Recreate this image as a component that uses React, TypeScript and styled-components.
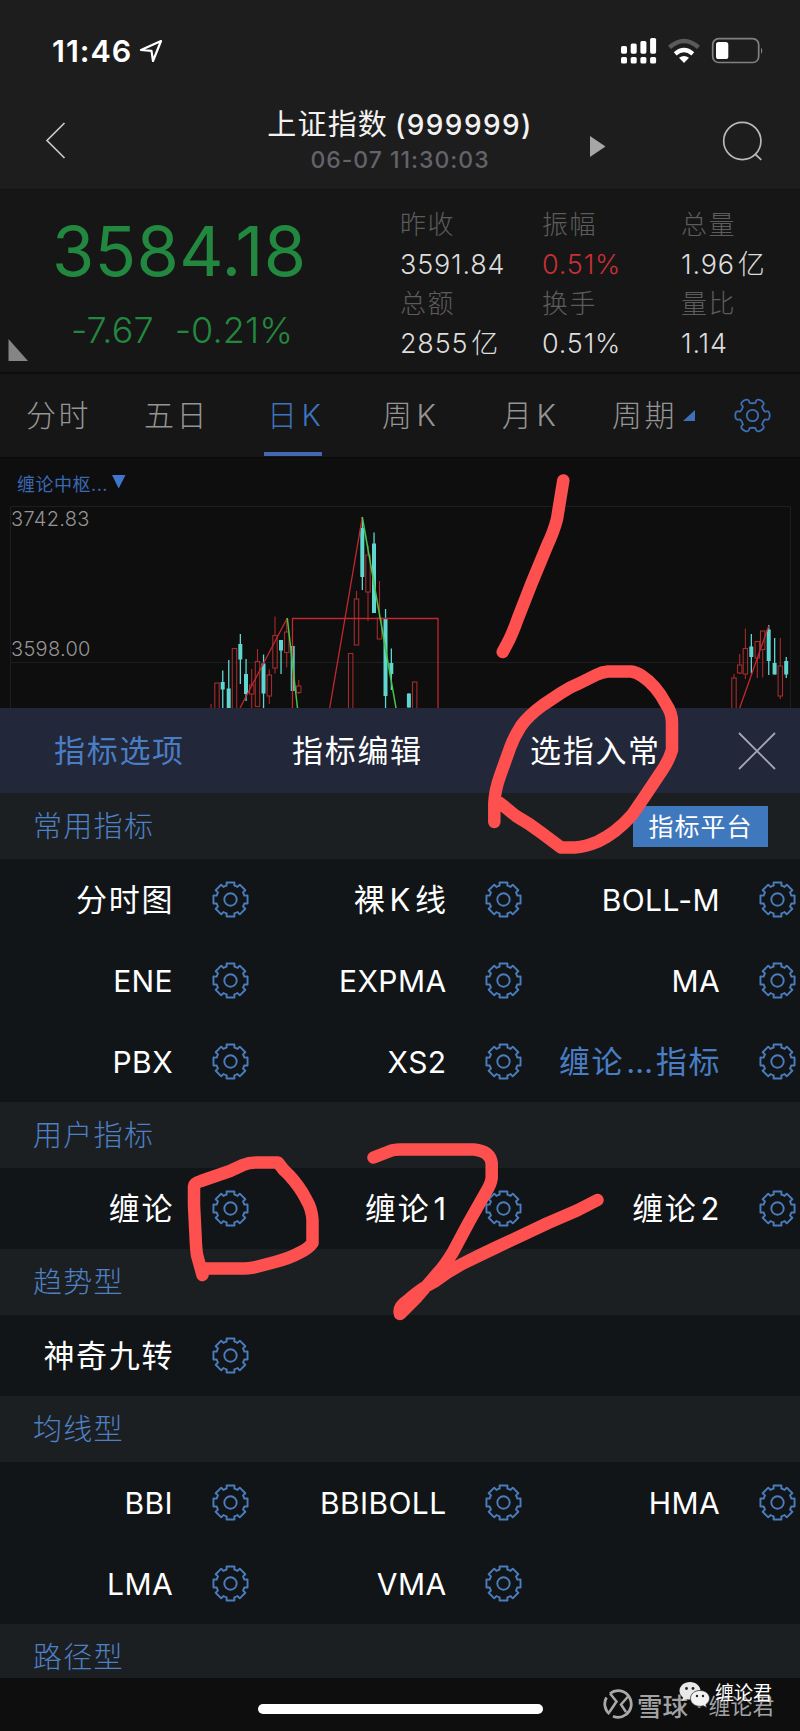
import React from "react";
import styled, { createGlobalStyle } from "styled-components";

const GlobalStyle = createGlobalStyle`
  * { box-sizing: border-box; }
  body {
    margin: 0;
    background: #0e0e0e;
    font-family: Inter, "Noto Sans CJK SC", sans-serif;
    -webkit-font-smoothing: antialiased;
  }
`;

const Screen = styled.main`
  position: relative;
  width: 800px;
  height: 1731px;
  overflow: hidden;
  display: flex;
  flex-direction: column;
  background: #0e0e0e;
  white-space: nowrap;
`;

const Header = styled.header`
  height: 190px;
  flex: none;
  background: #1d1d1d;
  border-bottom: 1px solid #121212;
`;

const StatusBar = styled.div`
  display: flex;
  align-items: center;
  justify-content: space-between;
  height: 102px;
  padding: 0 36px 0 52px;
`;

const Clock = styled.div`
  display: flex;
  align-items: center;
  gap: 7px;
  padding-bottom: 1px;
  color: #fff;
  font-size: 30.5px;
  font-weight: 600;
  letter-spacing: 1px;
`;

const NavBar = styled.div`
  display: grid;
  grid-template-columns: 210px 380px 1fr;
  height: 87px;
`;

const NavCell = styled.div<{ $pad?: number }>`
  display: flex;
  align-items: flex-start;
  padding: 18px 0 0 ${(p) => p.$pad ?? 0}px;
`;

const TitleBlock = styled.div`
  display: flex;
  flex-direction: column;
  align-items: center;
`;

const Title = styled.h1`
  display: flex;
  gap: 7px;
  margin: 4px 0 0;
  height: 38px;
  line-height: 38px;
  font-size: 29px;
  font-weight: 400;
  letter-spacing: 1.2px;
  color: #f2f2f2;
`;

const Code = styled.span`
  font-size: 28px;
  font-weight: 500;
  letter-spacing: 1.4px;
`;

const Stamp = styled.div`
  height: 30px;
  line-height: 32px;
  font-size: 23px;
  font-weight: 500;
  letter-spacing: 1px;
  color: #63636a;
`;

const Quote = styled.section`
  display: flex;
  flex: none;
  height: 184px;
  background: #161616;
  border-bottom: 2px solid #0d0d0d;
`;

const PriceBlock = styled.div`
  position: relative;
  width: 400px;
  padding: 20px 0 0 52px;
  color: #23883f;
`;

const Price = styled.div`
  height: 84px;
  line-height: 84px;
  font-size: 68.5px;
  font-weight: 400;
  letter-spacing: 0.3px;
`;

const Change = styled.div`
  display: flex;
  gap: 21px;
  height: 72px;
  padding-left: 19px;
  line-height: 72px;
  font-size: 36px;
  font-weight: 300;
  letter-spacing: 0.1px;
`;

const Corner = styled.svg`
  position: absolute;
  left: 8px;
  bottom: 11px;
`;

const Stats = styled.div`
  display: grid;
  grid-template-columns: 142px 139px 1fr;
  grid-auto-rows: 79px;
  flex: 1;
  padding-top: 15px;
`;

const StatLabel = styled.div`
  height: 40px;
  line-height: 40px;
  font-size: 26px;
  font-weight: 300;
  letter-spacing: 1.5px;
  color: #5c5c5c;
`;

const StatValue = styled.div<{ $up?: boolean }>`
  height: 39px;
  line-height: 39px;
  font-size: 27px;
  font-weight: 300;
  letter-spacing: 0.8px;
  color: ${(p) => (p.$up ? "#c92f35" : "#dcdcdc")};
  span { margin-left: 3px; }
`;

const Tabs = styled.nav`
  display: flex;
  flex: none;
  height: 84px;
  padding: 1px 0 0 26px;
  background: #161616;
  border-bottom: 1px solid #0a0a0a;
`;

const Tab = styled.div<{ $active?: boolean; $w: number }>`
  position: relative;
  display: flex;
  align-items: center;
  width: ${(p) => p.$w}px;
  height: 81px;
  font-size: 30px;
  font-weight: 300;
  color: ${(p) => (p.$active ? "#3d74bf" : "#959595")};
  &::after {
    content: "";
    display: ${(p) => (p.$active ? "block" : "none")};
    position: absolute;
    left: -3px;
    bottom: 0;
    width: 58px;
    height: 4px;
    background: #4468b0;
  }
`;

const TabLabel = styled.div`
  padding-bottom: 1px;
  line-height: 44px;
  letter-spacing: 2.4px;
  span { margin-left: 2px; }
`;

const ChartPane = styled.section`
  position: relative;
  flex: none;
  height: 250px;
  background: #0e0e0e;
`;

const ChartSvg = styled.svg`
  display: block;
`;

const Legend = styled.div`
  position: absolute;
  left: 17px;
  top: 11px;
  display: flex;
  align-items: center;
  gap: 4px;
  height: 28px;
  font-size: 18px;
  font-weight: 400;
  letter-spacing: 0.5px;
  color: #3b68b4;
`;

const AxisLabel = styled.div<{ $top: number }>`
  position: absolute;
  left: 11px;
  top: ${(p) => p.$top}px;
  line-height: 24px;
  font-size: 20px;
  font-weight: 300;
  letter-spacing: 0.3px;
  color: #959595;
`;

const Sheet = styled.section`
  flex: none;
  height: 970px;
  overflow: hidden;
  background: #111518;
`;

const SheetHead = styled.div`
  display: flex;
  align-items: center;
  height: 85px;
  padding-left: 54px;
  background: #22273a;
`;

const SheetTab = styled.div<{ $active?: boolean; $w: number }>`
  width: ${(p) => p.$w}px;
  font-size: 31px;
  line-height: 44px;
  letter-spacing: 1.7px;
  color: ${(p) => (p.$active ? "#4a7ec4" : "#fff")};
`;

const SectionHead = styled.div`
  display: flex;
  align-items: center;
  justify-content: space-between;
  height: 66px;
  padding: 0 32px 0 33px;
  background: #1b1f22;
  font-size: 29px;
  font-weight: 300;
  letter-spacing: 1.3px;
  color: #4f80c4;
`;

const SectionTitle = styled.div`
  padding-bottom: 4px;
`;

const Platform = styled.div`
  display: flex;
  align-items: center;
  justify-content: center;
  width: 135px;
  height: 41px;
  padding-bottom: 3px;
  background: #3f78bd;
  color: #fff;
  font-size: 25px;
  font-weight: 400;
  letter-spacing: 1px;
`;

const Grid = styled.div`
  display: grid;
  grid-template-columns: 273.5px 273.5px 253px;
  grid-auto-rows: 81px;
`;

const Cell = styled.div<{ $active?: boolean }>`
  display: grid;
  grid-template-columns: 173px 37px;
  column-gap: 38.5px;
  align-items: center;
  color: ${(p) => (p.$active ? "#4a7ec4" : "#fff")};
`;

const Name = styled.div<{ $cjk: boolean }>`
  text-align: right;
  padding-bottom: ${(p) => (p.$cjk ? 4 : 0)}px;
  font-size: ${(p) => (p.$cjk ? 31 : 30)}px;
  letter-spacing: ${(p) => (p.$cjk ? 1.7 : 0.4)}px;
  margin-right: ${(p) => (p.$cjk ? -1.2 : 0)}px;
`;

const Latin = styled.span<{ $last?: boolean }>`
  margin-left: 3px;
  margin-right: ${(p) => (p.$last ? 0 : 3)}px;
`;

const Dots = styled.span`
  margin: 0 1px 0 2px;
`;

const Footer = styled.footer`
  flex: 1;
  display: flex;
  justify-content: center;
  padding-top: 26px;
`;

const HomeBar = styled.div`
  width: 285px;
  height: 10px;
  border-radius: 5px;
  background: #fff;
`;

const Watermark = styled.div`
  position: absolute;
  left: 602px;
  top: 1685px;
  display: flex;
  align-items: center;
  height: 38px;
  color: #a3a3a3;
  font-size: 25.5px;
  font-weight: 500;
`;

const WatermarkUser = styled.span`
  margin-left: 8px;
  font-size: 22px;
  font-weight: 400;
`;

const Account = styled.div`
  position: absolute;
  left: 679px;
  top: 1680px;
  display: flex;
  gap: 4px;
  color: #fff;
  font-size: 19px;
  line-height: 28px;
`;

const Overlay = styled.svg`
  position: absolute;
  inset: 0;
  pointer-events: none;
`;

/* ---------- icons ---------- */

const polar = (r: number, deg: number) => {
  const a = (deg * Math.PI) / 180;
  return `${(r * Math.cos(a)).toFixed(2)} ${(r * Math.sin(a)).toFixed(2)}`;
};

const cogPath = Array.from({ length: 8 }, (_, i) => {
  const c = i * 45 - 90;
  return `${i ? "L" : "M"}${polar(14.4, c - 15.5)}L${polar(17.5, c - 13)}L${polar(17.5, c + 13)}L${polar(14.4, c + 15.5)}A14.4 14.4 0 0 1 ${polar(14.4, c + 29.5)}`;
}).join("") + "Z";

const Cog = () => (
  <svg width="37" height="37" viewBox="-18.5 -18.5 37 37" fill="none" stroke="#4a7dbd" strokeWidth="1.9" strokeLinejoin="round">
    <path d={cogPath} />
    <circle r="6.2" />
  </svg>
);

const roundCogPath = Array.from({ length: 6 }, (_, i) => {
  const c = i * 60;
  return `${i ? "L" : "M"}${polar(13, c - 17)}Q${polar(17, c - 17)} ${polar(17, c - 8)}Q${polar(17.6, c)} ${polar(17, c + 8)}Q${polar(17, c + 17)} ${polar(13, c + 17)}Q${polar(11.8, c + 30)} ${polar(13, c + 43)}`;
}).join("") + "Z";

const RoundCog = () => (
  <svg width="37" height="37" viewBox="-18.5 -18.5 37 37" fill="none" stroke="#3d6fb5" strokeWidth="1.8" strokeLinejoin="round">
    <path d={roundCogPath} />
    <circle r="5.7" />
  </svg>
);

const StatusIcons = () => (
  <svg width="144" height="28" viewBox="619 37 144 28">
    <g fill="#fff">
      {[46, 43.5, 41, 38].map((top, i) => (
        <g key={top}>
          <rect x={620 + i * 9.7} y={top} width="6" height={53.7 - top} rx="1.6" />
          <rect x={620 + i * 9.7} y="57" width="6" height="6.6" rx="1.6" />
        </g>
      ))}
      <path d="M683 63l-5-5.200q5-3.800 10 0z" />
    </g>
    <path d="M674.200 53.800q8.800-7.600 17.600 0" fill="none" stroke="#fff" strokeWidth="4.300" />
    <path d="M668.500 47.400q14.500-12.800 29 0" fill="none" stroke="#5a5a5a" strokeWidth="4.300" />
    <rect x="711.700" y="38.700" width="46" height="23.800" rx="6" fill="none" stroke="#818181" strokeWidth="1.700" />
    <rect x="715" y="42" width="12.300" height="17" rx="2.600" fill="#fff" />
    <path d="M760 47.500q2.600 3.200 0 6.600z" fill="#818181" />
  </svg>
);

/* ---------- chart ---------- */

// x, high, low, body top, body bottom, direction
type Candle = [number, number, number, number, number, "u" | "d"];

const candles: Candle[] = [
  [211, 704, 710, 709, 715, "u"],
  [217, 683, 712, 683, 712, "u"],
  [222.7, 670.5, 708, 682, 689.5, "d"],
  [228.7, 660, 708, 688.5, 708, "d"],
  [234.5, 648.5, 712, 648.5, 712, "u"],
  [240.3, 634, 684, 644, 659.5, "d"],
  [246, 659, 701, 674, 694, "d"],
  [251.7, 669, 708, 685, 694, "u"],
  [257.5, 649, 707, 661.5, 706.5, "u"],
  [263.5, 654.5, 708, 663.5, 693.5, "d"],
  [269.3, 669.5, 704, 675, 696, "u"],
  [275, 616.5, 673.5, 635.5, 668, "u"],
  [281, 640, 674, 640, 650.5, "d"],
  [286.7, 618, 667.5, 632, 652.5, "u"],
  [292.7, 646, 691, 646, 691, "d"],
  [298.7, 680, 694, 686, 692.5, "u"],
  [350.7, 653.5, 712, 653.5, 712, "u"],
  [356.5, 591, 645, 599, 645, "u"],
  [362.3, 517, 590, 528, 577, "d"],
  [368, 545, 621, 555, 592, "u"],
  [374, 532.5, 613, 543.5, 613, "d"],
  [379.5, 581, 639, 618, 639, "u"],
  [385.5, 609, 708, 618, 696, "d"],
  [391.3, 648.5, 690, 663, 674, "d"],
  [408.9, 693.5, 707.5, 693.5, 707.5, "d"],
  [414.7, 682, 712, 682, 712, "u"],
  [734, 674, 712, 678, 712, "u"],
  [739.7, 654, 674, 665, 673, "u"],
  [745.4, 628.5, 679, 648.5, 674, "u"],
  [751.3, 634, 673.5, 646.5, 657, "d"],
  [757.3, 641.5, 678, 641.5, 658, "u"],
  [762.7, 631, 677.5, 631, 649.5, "u"],
  [768.7, 625, 675, 629.5, 661, "d"],
  [774.6, 638, 674.5, 663, 674.5, "d"],
  [780.3, 638, 699, 666, 696, "u"],
  [786.2, 657, 678, 661, 674.5, "d"],
];

const Chart = () => (
  <ChartSvg width="800" height="250" viewBox="0 458 800 250">
    <g fill="none" stroke="#1d1f1f" strokeWidth="1">
      <path d="M10.500 708V506.500H790.500V708M10 662.500H790" />
    </g>
    {candles.map(([x, high, low, top, bottom, dir]) =>
      dir === "d" ? (
        <g key={x} fill="#5fd6d0">
          <rect x={x - 0.6} y={high} width="1.3" height={low - high} />
          <rect x={x - 2} y={top} width="4" height={bottom - top} />
        </g>
      ) : (
        <g key={x} stroke="#a32b2b" strokeWidth="1.1" fill="none">
          <path d={`M${x} ${high}V${top}M${x} ${bottom}V${low}`} />
          <rect x={x - 2.2} y={top} width="4.4" height={bottom - top} />
        </g>
      )
    )}
    <g fill="none" stroke="#c42730" strokeWidth="1.300">
      <path d="M240 708L287.300 618M329.700 708L362.300 517M739.700 708L768.700 626" />
      <path d="M292.500 708V618.500H438V708" />
    </g>
    <path d="M287.300 618L297.500 708M362.300 517L396 708" fill="none" stroke="#45c646" strokeWidth="1.500" />
  </ChartSvg>
);

/* ---------- indicator lists ---------- */

const sections: { title: string; platform?: boolean; items: string[] }[] = [
  { title: "常用指标", platform: true, items: ["分时图", "裸K线", "BOLL-M", "ENE", "EXPMA", "MA", "PBX", "XS2", "缠论…指标"] },
  { title: "用户指标", items: ["缠论", "缠论1", "缠论2"] },
  { title: "趋势型", items: ["神奇九转"] },
  { title: "均线型", items: ["BBI", "BBIBOLL", "HMA", "LMA", "VMA"] },
  { title: "路径型", items: [] },
];

const hasCjk = (s: string) => /[\u4e00-\u9fff]/.test(s);

const IndicatorName = ({ text }: { text: string }) => {
  if (!hasCjk(text)) return <Name $cjk={false}>{text}</Name>;
  const parts = text.split(/([A-Z0-9]+|…)/).filter(Boolean);
  return (
    <Name $cjk>
      {parts.map((p, i) => {
        if (p === "…") return <Dots key={i}>{p}</Dots>;
        return /[A-Z0-9]/.test(p) ? <Latin key={i} $last={i === parts.length - 1}>{p}</Latin> : p;
      })}
    </Name>
  );
};

const stats: [string, React.ReactNode, boolean?][] = [
  ["昨收", "3591.84"],
  ["振幅", "0.51%", true],
  ["总量", <>1.96<span>亿</span></>],
  ["总额", <>2855<span>亿</span></>],
  ["换手", "0.51%"],
  ["量比", "1.14"],
];

export default function App() {
  return (
    <Screen>
      <GlobalStyle />
      <Header>
        <StatusBar>
          <Clock>
            11:46
            <svg width="24" height="24" viewBox="0 0 24 24" fill="none" stroke="#fff" strokeWidth="2.200" strokeLinejoin="round">
              <path d="M22 2L2 11l10.500.900L14 22z" />
            </svg>
          </Clock>
          <StatusIcons />
        </StatusBar>
        <NavBar>
          <NavCell $pad={45}>
            <svg width="22" height="40" viewBox="0 0 22 40" fill="none" stroke="#c8c8c8" strokeWidth="1.700">
              <path d="M19.500 3L2 20.500L19.500 38" />
            </svg>
          </NavCell>
          <TitleBlock>
            <Title>上证指数<Code>(999999)</Code></Title>
            <Stamp>06-07 11:30:03</Stamp>
          </TitleBlock>
          <NavCell>
            <svg width="172" height="45" viewBox="590 120 172 45" overflow="visible">
              <path d="M590 136v21l15.500-10.500z" fill="#a6a6a6" />
              <g fill="none" stroke="#b9b9b9" strokeWidth="1.700">
                <circle cx="742.300" cy="141" r="18.600" />
                <path d="M755 154l6.300 5.800" />
              </g>
            </svg>
          </NavCell>
        </NavBar>
      </Header>

      <Quote>
        <PriceBlock>
          <Price>3584.18</Price>
          <Change><span>-7.67</span><span>-0.21%</span></Change>
          <Corner width="20" height="22"><path d="M0.500 0V22H20z" fill="#858585" /></Corner>
        </PriceBlock>
        <Stats>
          {stats.map(([label, value, up]) => (
            <div key={label}>
              <StatLabel>{label}</StatLabel>
              <StatValue $up={up}>{value}</StatValue>
            </div>
          ))}
        </Stats>
      </Quote>

      <Tabs>
        <Tab $w={118}><TabLabel>分时</TabLabel></Tab>
        <Tab $w={123}><TabLabel>五日</TabLabel></Tab>
        <Tab $w={115} $active><TabLabel>日<span>K</span></TabLabel></Tab>
        <Tab $w={120}><TabLabel>周<span>K</span></TabLabel></Tab>
        <Tab $w={110}><TabLabel>月<span>K</span></TabLabel></Tab>
        <Tab $w={122}>
          <TabLabel>周期</TabLabel>
          <svg width="13" height="12" style={{ marginLeft: 6 }}><path d="M12 0V11H0z" fill="#3f70b8" /></svg>
        </Tab>
        <Tab $w={40}><RoundCog /></Tab>
      </Tabs>

      <ChartPane>
        <Chart />
        <Legend>
          缠论中枢...
          <svg width="14" height="16"><path d="M0 0H13.500L6.700 13.500z" fill="#3f75cc" /></svg>
        </Legend>
        <AxisLabel $top={49}>3742.83</AxisLabel>
        <AxisLabel $top={179}>3598.00</AxisLabel>
      </ChartPane>

      <Sheet>
        <SheetHead>
          <SheetTab $w={238} $active>指标选项</SheetTab>
          <SheetTab $w={238}>指标编辑</SheetTab>
          <SheetTab $w={208}>选指入常</SheetTab>
          <svg width="38" height="38" viewBox="0 0 38 38" stroke="#a4a8b2" strokeWidth="1.800">
            <path d="M1 1L37 37M37 1L1 37" />
          </svg>
        </SheetHead>
        {sections.map((s) => (
          <div key={s.title}>
            <SectionHead>
              <SectionTitle>{s.title}</SectionTitle>
              {s.platform && <Platform>指标平台</Platform>}
            </SectionHead>
            <Grid>
              {s.items.map((name) => (
                <Cell key={name} $active={name.includes("…")}>
                  <IndicatorName text={name} />
                  <Cog />
                </Cell>
              ))}
            </Grid>
          </div>
        ))}
      </Sheet>

      <Footer><HomeBar /></Footer>

      <Watermark>
        <svg width="32" height="32" viewBox="-16 -16 32 32" fill="none" stroke="#a9a9a9" strokeWidth="2.800">
          <path d="M-8 -10.500A13 13 0 0 1 11.500 -6.500M-11.500 -6.500A13 13 0 0 0 -8.500 10M-5 12.200A13 13 0 0 0 8 10.500M11.500 -6.500A13 13 0 0 1 8 10.500" />
          <path d="M-8 -10.500L-1.500 -2.500L-8.500 8M10.500 -8L3 0.500L8 8" strokeWidth="2.500" />
        </svg>
        <span style={{ marginLeft: 3 }}>雪球</span>
        <WatermarkUser>· 缠论君</WatermarkUser>
      </Watermark>
      <Account>
        <svg width="32" height="28" viewBox="0 0 32 28">
          <path d="M11 2C5 2 0.500 6 0.500 10.800c0 2.800 1.500 5 3.700 6.700L3 21l4.200-2c1.200.400 2.500.500 3.800.500 6 0 10.500-4 10.500-8.700S17 2 11 2z" fill="#e8e8e8" />
          <path d="M21 10.500c-5.500 0-9.500 3.500-9.500 7.900s4 7.900 9.500 7.900c1.200 0 2.300-.200 3.300-.500l3.400 1.700-.800-3c2.200-1.500 3.600-3.600 3.600-6.100 0-4.400-4-7.900-9.500-7.900z" fill="#f2f2f2" stroke="#333" strokeWidth="0.800" />
          <g fill="#222"><circle cx="7.500" cy="8.500" r="1.400" /><circle cx="14" cy="8.500" r="1.400" /><circle cx="18" cy="16" r="1.200" /><circle cx="24" cy="16" r="1.200" /></g>
        </svg>
        缠论君
      </Account>

      <Overlay width="800" height="1731" fill="none" stroke="#ff5050" strokeWidth="12.500" strokeLinecap="round" strokeLinejoin="round">
        <path d="M563.300 480.500L557 519Q554 531 547 546L531.700 583L518 618Q512 635 507 644L502.700 652" />
        <path d="M494.300 822V803Q495 790 500 776L510 748Q514 737 521 726Q529 715 543 705L561 693Q570 687 580 683L596 675Q602 672 608 671.500H631Q636 672 642 676Q656 685 666 704Q672 713 672 722V750Q669 760 663 769L645 796L632 815Q616 833 598 841.500Q585 847 575 847.500H561L541 832.500Q530 824 516 816L500 803" />
        <path d="M202.500 1275L197 1255Q196 1248 195.500 1235L194 1205V1186Q194 1183 201 1181L230 1171L243 1165Q249 1162.500 257 1162.500H278Q283 1170 289 1175Q300 1187 306 1199Q312 1209 312.500 1220V1243Q308 1249 299 1253Q290 1258 275 1262L256 1267Q250 1268.500 240 1268.500H205" />
        <path d="M373.500 1157.500L389 1151.500Q393 1149.500 400 1149.500H474Q490 1151 491.700 1163V1178Q491 1184 486 1192L469 1222L453 1252Q444 1267 436 1275L417 1297L400 1314Q398 1307 407 1301Q420 1289 434 1282Q447 1272 462 1264Q478 1256 497 1247L548 1223L577 1210.500L597.500 1200" />
      </Overlay>
    </Screen>
  );
}
